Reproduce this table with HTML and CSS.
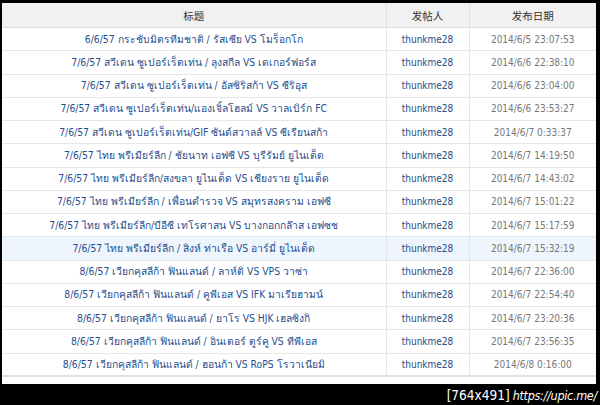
FILE: index.html
```html
<!DOCTYPE html>
<html>
<head>
<meta charset="utf-8">
<link rel="stylesheet" href="styles.css">
</head>
<body>
<div class="frame">
  <div class="sheet">
    <table class="list">
      <colgroup><col class="c-title"><col class="c-user"><col class="c-date"></colgroup>
      <thead>
        <tr><th>标题</th><th>发帖人</th><th>发布日期</th></tr>
      </thead>
      <tbody>
        <tr><td class="t">6/6/57 กระชับมิตรทีมชาติ / รัสเซีย VS โมร็อกโก</td><td class="u">thunkme28</td><td class="d">2014/6/5 23:07:53</td></tr>
        <tr><td class="t">7/6/57 สวีเดน ซูเปอร์เร็ตเท่น / ลุงสกีล VS เดเกอร์ฟอร์ส</td><td class="u">thunkme28</td><td class="d">2014/6/6 22:38:10</td></tr>
        <tr><td class="t">7/6/57 สวีเดน ซูเปอร์เร็ตเท่น / อัสซิริสก้า VS ซีริอุส</td><td class="u">thunkme28</td><td class="d">2014/6/6 23:04:00</td></tr>
        <tr><td class="t">7/6/57 สวีเดน ซูเปอร์เร็ตเท่น/แองเจิ้ลโฮลม์ VS วาลเบิร์ก FC</td><td class="u">thunkme28</td><td class="d">2014/6/6 23:53:27</td></tr>
        <tr><td class="t">7/6/57 สวีเดน ซูเปอร์เร็ตเท่น/GIF ซันด์สวาลล์ VS ซีเรียนสก้า</td><td class="u">thunkme28</td><td class="d">2014/6/7 0:33:37</td></tr>
        <tr><td class="t">7/6/57 ไทย พรีเมียร์ลีก / ชัยนาท เอฟซี VS บุรีรัมย์ ยูไนเต็ด</td><td class="u">thunkme28</td><td class="d">2014/6/7 14:19:50</td></tr>
        <tr><td class="t">7/6/57 ไทย พรีเมียร์ลีก/สงขลา ยูไนเต็ด VS เชียงราย ยูไนเต็ด</td><td class="u">thunkme28</td><td class="d">2014/6/7 14:43:02</td></tr>
        <tr><td class="t">7/6/57 ไทย พรีเมียร์ลีก / เพื่อนตำรวจ VS สมุทรสงคราม เอฟซี</td><td class="u">thunkme28</td><td class="d">2014/6/7 15:01:22</td></tr>
        <tr><td class="t">7/6/57 ไทย พรีเมียร์ลีก/บีอีซี เทโรศาสน VS บางกอกกล๊าส เอฟซช</td><td class="u">thunkme28</td><td class="d">2014/6/7 15:17:59</td></tr>
        <tr class="hover"><td class="t">7/6/57 ไทย พรีเมียร์ลีก / สิงห์ ท่าเรือ VS อาร์มี่ ยูไนเต็ด</td><td class="u">thunkme28</td><td class="d">2014/6/7 15:32:19</td></tr>
        <tr><td class="t">8/6/57 เวียกคุสลีก้า ฟินแลนด์ / ลาห์ติ VS VPS วาซ่า</td><td class="u">thunkme28</td><td class="d">2014/6/7 22:36:00</td></tr>
        <tr><td class="t">8/6/57 เวียกคุสลีก้า ฟินแลนด์ / คูพีเอส VS IFK มาเรียฮามน์</td><td class="u">thunkme28</td><td class="d">2014/6/7 22:54:40</td></tr>
        <tr><td class="t">8/6/57 เวียกคุสลีก้า ฟินแลนด์ / ยาโร VS HJK เฮลซิงกิ</td><td class="u">thunkme28</td><td class="d">2014/6/7 23:20:36</td></tr>
        <tr><td class="t">8/6/57 เวียกคุสลีก้า ฟินแลนด์ / อินเตอร์ ตูร์คู VS ทีพีเอส</td><td class="u">thunkme28</td><td class="d">2014/6/7 23:56:35</td></tr>
        <tr><td class="t">8/6/57 เวียกคุสลีก้า ฟินแลนด์ / ฮอนก้า VS RoPS โรวาเนียมิ</td><td class="u">thunkme28</td><td class="d">2014/6/8 0:16:00</td></tr>
      </tbody>
    </table>
  </div>
  <div class="mark"><span class="size">[764x491]</span><span class="url">https://upic.me/</span></div>
</div>
</body>
</html>
```
FILE: styles.css
```css
html, body {
  margin: 0;
  padding: 0;
  background: #000;
}
.frame {
  width: 600px;
  height: 405px;
  padding: 3px 4px 0 2px;
  box-sizing: border-box;
  display: flex;
  flex-direction: column;
}
.sheet {
  background: #fff;
  height: 381px;
  box-sizing: border-box;
}
.list {
  width: 594px;
  border-collapse: collapse;
  table-layout: fixed;
  font-family: "DejaVu Sans Condensed", "DejaVu Sans", sans-serif;
  font-size: 10px;
}
.c-title { width: 384px; }
.c-user { width: 83px; }
.c-date { width: 127px; }
.list th {
  height: 24px;
  padding: 0;
  background: #f1f1f1;
  color: #333;
  font-weight: normal;
  font-family: "Noto Sans CJK SC", sans-serif;
  font-size: 10.5px;
  border-left: 1px solid #e2e2e2;
  border-bottom: 1px solid #dcdcdc;
  text-align: center;
}
.list th:first-child, .list td:first-child { border-left: none; }
.list td {
  height: 23.25px;
  padding: 0;
  text-align: center;
  white-space: nowrap;
  overflow: hidden;
  border-left: 1px solid #e6e6e6;
  border-bottom: 1px solid #e6e6e6;
  box-sizing: border-box;
}
.list tr:last-child td { border-bottom: 2px solid #e0e0e0; }
.t { color: #1f4f8f; font-size: 10.3px; }
.u { color: #214c86; }
.d { color: #777; }
.hover td { background: #eef5fd; }
.mark {
  align-self: flex-end;
  margin-top: 3px;
  margin-right: -1px;
  color: #fff;
  line-height: 17px;
  display: flex;
  align-items: baseline;
  gap: 3px;
}
.size {
  font-family: "DejaVu Sans Condensed", sans-serif;
  font-size: 13.5px;
}
.url {
  font-family: "DejaVu Sans Condensed", sans-serif;
  font-style: italic;
  font-size: 12.5px;
  letter-spacing: -0.3px;
}
```
